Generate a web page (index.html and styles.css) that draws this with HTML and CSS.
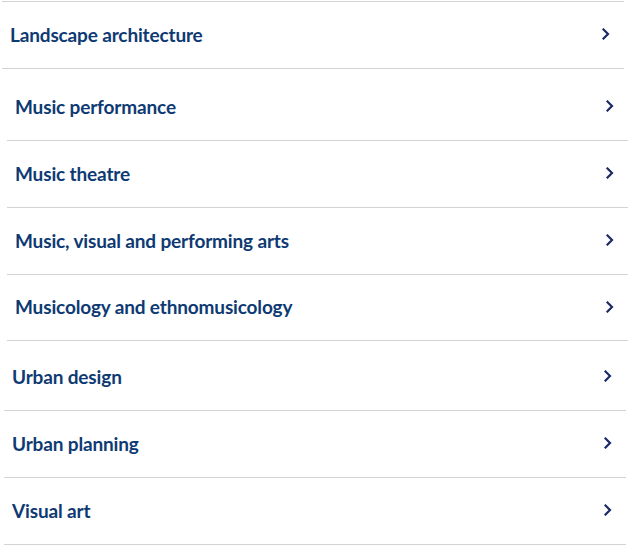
FILE: index.html
```html
<!DOCTYPE html>
<html lang="en">
<head>
<meta charset="utf-8">
<title>Courses</title>
<link rel="stylesheet" href="styles.css">
</head>
<body>
<div class="page">
  <ul class="group group-a">
    <li><a class="row" href="#"><span class="label">Landscape architecture</span><svg class="chev" viewBox="0 0 8 12" width="8" height="12"><path d="M1.5 1.5 L6 6 L1.5 10.5" /></svg></a></li>
  </ul>
  <ul class="group group-b">
    <li><a class="row" href="#"><span class="label">Music performance</span><svg class="chev" viewBox="0 0 8 12" width="8" height="12"><path d="M1.5 1.5 L6 6 L1.5 10.5" /></svg></a></li>
    <li><a class="row" href="#"><span class="label">Music theatre</span><svg class="chev" viewBox="0 0 8 12" width="8" height="12"><path d="M1.5 1.5 L6 6 L1.5 10.5" /></svg></a></li>
    <li><a class="row" href="#"><span class="label">Music, visual and performing arts</span><svg class="chev" viewBox="0 0 8 12" width="8" height="12"><path d="M1.5 1.5 L6 6 L1.5 10.5" /></svg></a></li>
    <li><a class="row" href="#"><span class="label">Musicology and ethnomusicology</span><svg class="chev" viewBox="0 0 8 12" width="8" height="12"><path d="M1.5 1.5 L6 6 L1.5 10.5" /></svg></a></li>
  </ul>
  <ul class="group group-c">
    <li><a class="row" href="#"><span class="label">Urban design</span><svg class="chev" viewBox="0 0 8 12" width="8" height="12"><path d="M1.5 1.5 L6 6 L1.5 10.5" /></svg></a></li>
    <li><a class="row" href="#"><span class="label">Urban planning</span><svg class="chev" viewBox="0 0 8 12" width="8" height="12"><path d="M1.5 1.5 L6 6 L1.5 10.5" /></svg></a></li>
    <li><a class="row" href="#"><span class="label">Visual art</span><svg class="chev" viewBox="0 0 8 12" width="8" height="12"><path d="M1.5 1.5 L6 6 L1.5 10.5" /></svg></a></li>
  </ul>
</div>
</body>
</html>
```
FILE: styles.css
```css
html, body {
  margin: 0;
  padding: 0;
  background: #ffffff;
}
.page {
  padding-top: 1px;
  font-family: Lato, "Open Sans", sans-serif;
}
.group {
  list-style: none;
  margin: 0;
  padding: 0;
}
.group-a {
  margin: 0 12px 0 2px;
  border-top: 1px solid #d3d3d3;
}
.group-b {
  margin: 5px 8px 0 7px;
}
.group-b li:last-child .row {
  height: 63px;
}
.group-c {
  margin: 3px 10px 0 4px;
}
.row {
  display: flex;
  align-items: center;
  justify-content: space-between;
  height: 64px;
  padding: 0 14px 2px 8px;
  border-bottom: 1px solid #d3d3d3;
  text-decoration: none;
  color: #0e3a73;
}
.label {
  font-size: 19px;
  font-weight: 700;
  letter-spacing: -0.15px;
}
.chev {
  fill: none;
  stroke: #1b2a66;
  stroke-width: 2.2;
  stroke-linecap: square;
}
```
